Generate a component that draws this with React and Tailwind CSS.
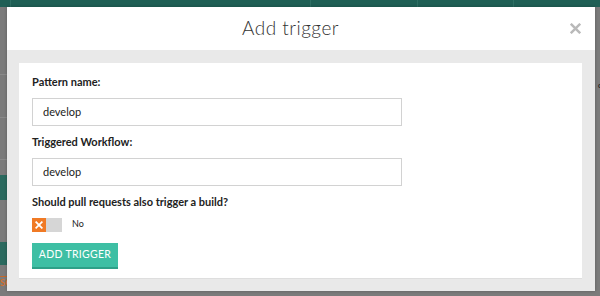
import React from 'react';

const font = { fontFamily: 'Lato, "Open Sans", sans-serif' };

const Field = ({ label, value }) => (
  <div>
    <div className="text-[11px] leading-[14px] font-bold text-[#222] mb-[9px]">{label}</div>
    <div className="w-[370px] h-[28px] border border-[#d2d2d2] bg-white flex items-center px-[10px] text-[11px] text-[#222]">
      {value}
    </div>
  </div>
);

const XIcon = ({ className, stroke }) => (
  <svg viewBox="0 0 10 10" className={className}>
    <path d="M1.5 1.5 L8.5 8.5 M8.5 1.5 L1.5 8.5" stroke={stroke} strokeWidth="2.2" strokeLinecap="square" fill="none" />
  </svg>
);

const App = () => {
  return (
    <div className="w-[600px] h-[296px] overflow-hidden bg-[#7b7b7b] flex flex-col" style={font}>
      {/* backdrop header bar */}
      <div className="h-[7px] bg-[#1f5f55] flex shrink-0">
        <div className="w-[11px] border-r border-[#2d6e63]" />
        <div className="w-[300px] border-r border-[#2d6e63]" />
        <div className="w-[107px] border-r border-[#2d6e63]" />
        <div className="w-[96px] border-r border-[#2d6e63]" />
      </div>

      <div className="flex flex-1 min-h-0">
        {/* backdrop left edge */}
        <div className="w-[7px] flex flex-col shrink-0">
          <div className="h-[68px] border-b border-[#8a8a8a]" />
          <div className="h-[43px] border-b border-[#8a8a8a]" />
          <div className="h-[42px] border-b border-[#8a8a8a]" />
          <div className="h-[15px]" />
          <div className="h-[25px] bg-[#2b6a5f]" />
          <div className="h-[42px]" />
          <div className="h-[23px] bg-[#2b6a5f]" />
          <div className="h-[12px] border-b border-[#c4682a]" />
          <div className="text-[9px] leading-[12px] text-[#d2702e] font-bold">SC</div>
        </div>

        {/* modal */}
        <div className="w-[588px] h-[284px] flex flex-col bg-[#e9e9e9] shadow-[0_0_3px_rgba(0,0,0,0.25)] shrink-0">
          <div className="h-[43px] bg-white flex items-center px-[14px] shrink-0">
            <div className="flex-1 text-center pr-[10px] text-[19px] font-light text-[#333] tracking-[0.5px]">
              Add trigger
            </div>
            <XIcon className="w-[11px] h-[11px]" stroke="#b9b9b9" />
          </div>

          <div className="pt-[13px] pl-[12px] pr-[13px]">
            <div className="bg-white h-[216px] border-b border-[#dedede] pt-[12px] px-[13px]">
              <Field label="Pattern name:" value="develop" />
              <div className="mt-[9px]">
                <Field label="Triggered Workflow:" value="develop" />
              </div>
              <div className="mt-[9px] text-[11px] leading-[14px] font-bold text-[#222]">
                Should pull requests also trigger a build?
              </div>
              <div className="mt-[9px] flex items-center">
                <div className="flex h-[14px]">
                  <div className="w-[14px] bg-[#f07a25] flex items-center justify-center">
                    <XIcon className="w-[8px] h-[8px]" stroke="#ffffff" />
                  </div>
                  <div className="w-[16px] bg-[#d6d6d6]" />
                </div>
                <span className="ml-[10px] text-[9px] text-[#222] -mt-[3px]">No</span>
              </div>
              <button className="mt-[11px] h-[26px] w-[86px] bg-[#3ebfa4] border-b-2 border-[#2ea088] text-white text-[10.5px] font-normal tracking-[0.3px] flex items-center justify-center">
                ADD TRIGGER
              </button>
            </div>
          </div>
        </div>

        {/* backdrop right edge */}
        <div className="flex-1 relative">
          <div className="absolute left-[3px] top-[73px] text-[7px] text-[#222] font-bold">c</div>
        </div>
      </div>
    </div>
  );
};

export default App;
